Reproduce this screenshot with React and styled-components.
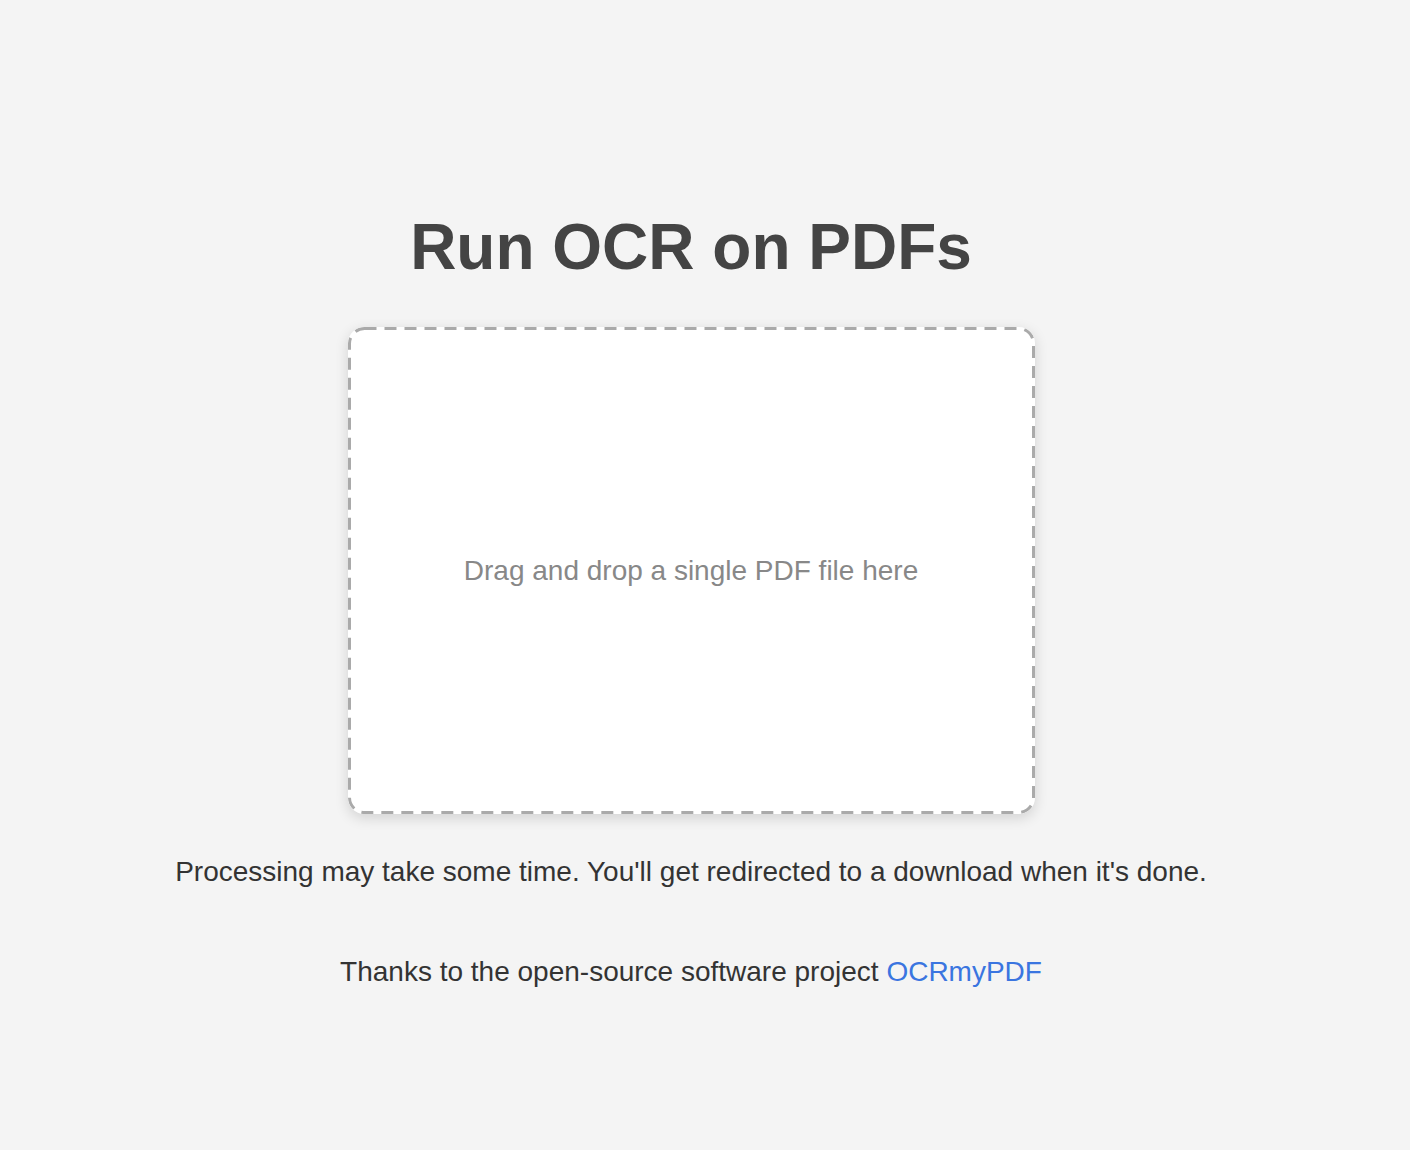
import React from 'react';
import styled, { createGlobalStyle } from 'styled-components';

const GlobalStyle = createGlobalStyle`
  html, body {
    margin: 0;
    padding: 0;
    background: #f4f4f4;
  }
  body {
    font-family: "Liberation Sans", Arial, Helvetica, sans-serif;
  }
`;

// dashed outline drawn as svg so the dash rhythm matches the original
const dashedBorder = `url("data:image/svg+xml,%3csvg xmlns='http://www.w3.org/2000/svg' width='100%25' height='100%25'%3e%3crect x='1.5' y='1.5' width='calc(100%25 - 3px)' height='calc(100%25 - 3px)' rx='15' ry='15' fill='none' stroke='%23aaaaaa' stroke-width='3' stroke-dasharray='12 8'/%3e%3c/svg%3e")`;

function App() {
  return (
    <>
      <GlobalStyle />
      <Page>
        <Title>Run OCR on PDFs</Title>
        <DropZone>
          <DropHint>Drag and drop a single PDF file here</DropHint>
        </DropZone>
        <Note>Processing may take some time. You'll get redirected to a download when it's done.</Note>
        <Credits>
          Thanks to the open-source software project <a href="#ocrmypdf">OCRmyPDF</a>
        </Credits>
      </Page>
    </>
  );
}

const Page = styled.main`
  display: flex;
  flex-direction: column;
  align-items: center;
  min-height: 1150px;
  box-sizing: border-box;
  padding: 206px 28px 0 0;
`;

const Title = styled.h1`
  margin: 0 0 38px;
  font-size: 64px;
  font-weight: bold;
  line-height: 1.3;
  color: #444;
`;

const DropZone = styled.div`
  width: 687px;
  height: 487px;
  box-sizing: border-box;
  display: flex;
  align-items: center;
  justify-content: center;
  background-color: #fff;
  background-image: ${dashedBorder};
  border-radius: 16px;
  box-shadow: 0 4px 14px rgba(0, 0, 0, 0.14);
`;

const DropHint = styled.p`
  margin: 0;
  font-size: 28px;
  color: #888;
`;

const Note = styled.p`
  margin: 42px 0 0;
  font-size: 28px;
  color: #333;
`;

const Credits = styled.p`
  margin: 68px 0 0;
  font-size: 28px;
  color: #333;

  a {
    color: #3a75e0;
    text-decoration: none;
  }
`;

export default App;
